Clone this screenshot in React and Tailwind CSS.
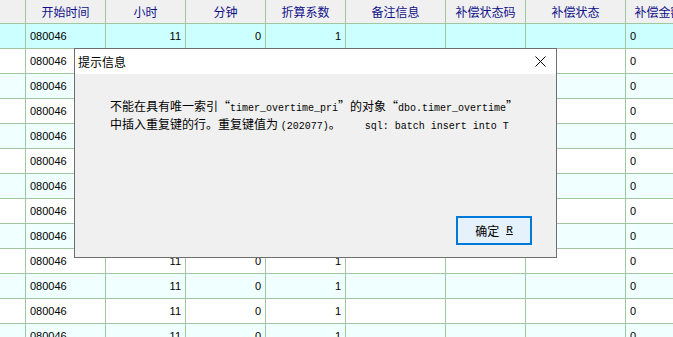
const cols = [
  { w: 'w-[26px]', label: '', align: 'text-left' },
  { w: 'w-[80px]', label: '开始时间', align: 'text-left pl-[4px]' },
  { w: 'w-[80px]', label: '小时', align: 'text-right pr-[4px]' },
  { w: 'w-[80px]', label: '分钟', align: 'text-right pr-[4px]' },
  { w: 'w-[80px]', label: '折算系数', align: 'text-right pr-[4px]' },
  { w: 'w-[100px]', label: '备注信息', align: 'text-left pl-[4px]' },
  { w: 'w-[80px]', label: '补偿状态码', align: 'text-left pl-[4px]' },
  { w: 'w-[100px]', label: '补偿状态', align: 'text-left pl-[4px]' },
  { w: 'w-[66px]', label: '补偿金额', align: 'text-left pl-[4px]' },
];

const rowValues = ['', '080046', '11', '0', '1', '', '', '', '0'];

function Mono({ children }) {
  return (
    <span className="font-['Liberation_Mono',monospace] text-[10px] whitespace-pre">
      {children}
    </span>
  );
}

function LQ() {
  return <span className="inline-block w-[12px] text-right">“</span>;
}

function RQ() {
  return <span className="inline-block w-[12px] text-left">”</span>;
}

export default function App() {
  const rows = Array.from({ length: 13 }, (_, i) => i);
  return (
    <div className="relative w-[673px] h-[337px] overflow-hidden bg-white font-['Noto_Sans_CJK_SC',sans-serif] text-[12px]">
      <div className="flex h-[24px] bg-[#f0f0f0]">
        {cols.map((c, i) => (
          <div
            key={i}
            className={`${c.w} shrink-0 h-full border-r border-b border-[#a0c8a0] text-center leading-[23px] text-[#10108a] whitespace-nowrap overflow-hidden`}
          >
            {c.label}
          </div>
        ))}
      </div>
      {rows.map((r) => (
        <div
          key={r}
          className={`flex h-[25px] ${
            r === 0 ? 'bg-[#ccffff]' : r % 2 === 0 ? 'bg-[#f0ffff]' : 'bg-white'
          }`}
        >
          {cols.map((c, i) => (
            <div
              key={i}
              className={`${c.w} ${c.align} shrink-0 h-full border-r border-b border-[#a0c8a0] leading-[24px] font-['Liberation_Sans',sans-serif] text-[11px] text-black whitespace-nowrap overflow-hidden`}
            >
              {rowValues[i]}
            </div>
          ))}
        </div>
      ))}

      <div className="absolute left-[74px] top-[48px] w-[483px] h-[210px] border border-[#6e6e6e] bg-[#f0f0f0] flex flex-col">
        <div className="h-[25px] bg-white flex items-center justify-between pl-[3px] pr-[10px]">
          <span className="text-[12px] text-black">提示信息</span>
          <svg width="11" height="11" viewBox="0 0 11 11">
            <path d="M0.5 0.5 L10.5 10.5 M10.5 0.5 L0.5 10.5" stroke="#000" strokeWidth="1" />
          </svg>
        </div>
        <div className="flex-1 flex flex-col pl-[35px] pt-[24px] pr-[10px] pb-[12px]">
          <div className="leading-[15px] text-black whitespace-nowrap">
            <div>
              不能在具有唯一索引<LQ /><Mono>timer_overtime_pri</Mono><RQ />的对象<LQ /><Mono>dbo.timer_overtime</Mono><RQ />
            </div>
            <div>
              中插入重复键的行。重复键值为 <Mono>(202077)</Mono>。<Mono>{'    sql: batch insert into T'}</Mono>
            </div>
          </div>
          <div className="mt-auto flex justify-end pr-[14px]">
            <button className="w-[76px] h-[29px] border-2 border-[#0078d7] bg-[#e5f1fb] text-[12px] text-black flex items-center justify-center gap-[7px]">
              <span>确定</span>
              <span className="font-['Liberation_Mono',monospace] text-[11px] underline">R</span>
            </button>
          </div>
        </div>
      </div>
    </div>
  );
}
